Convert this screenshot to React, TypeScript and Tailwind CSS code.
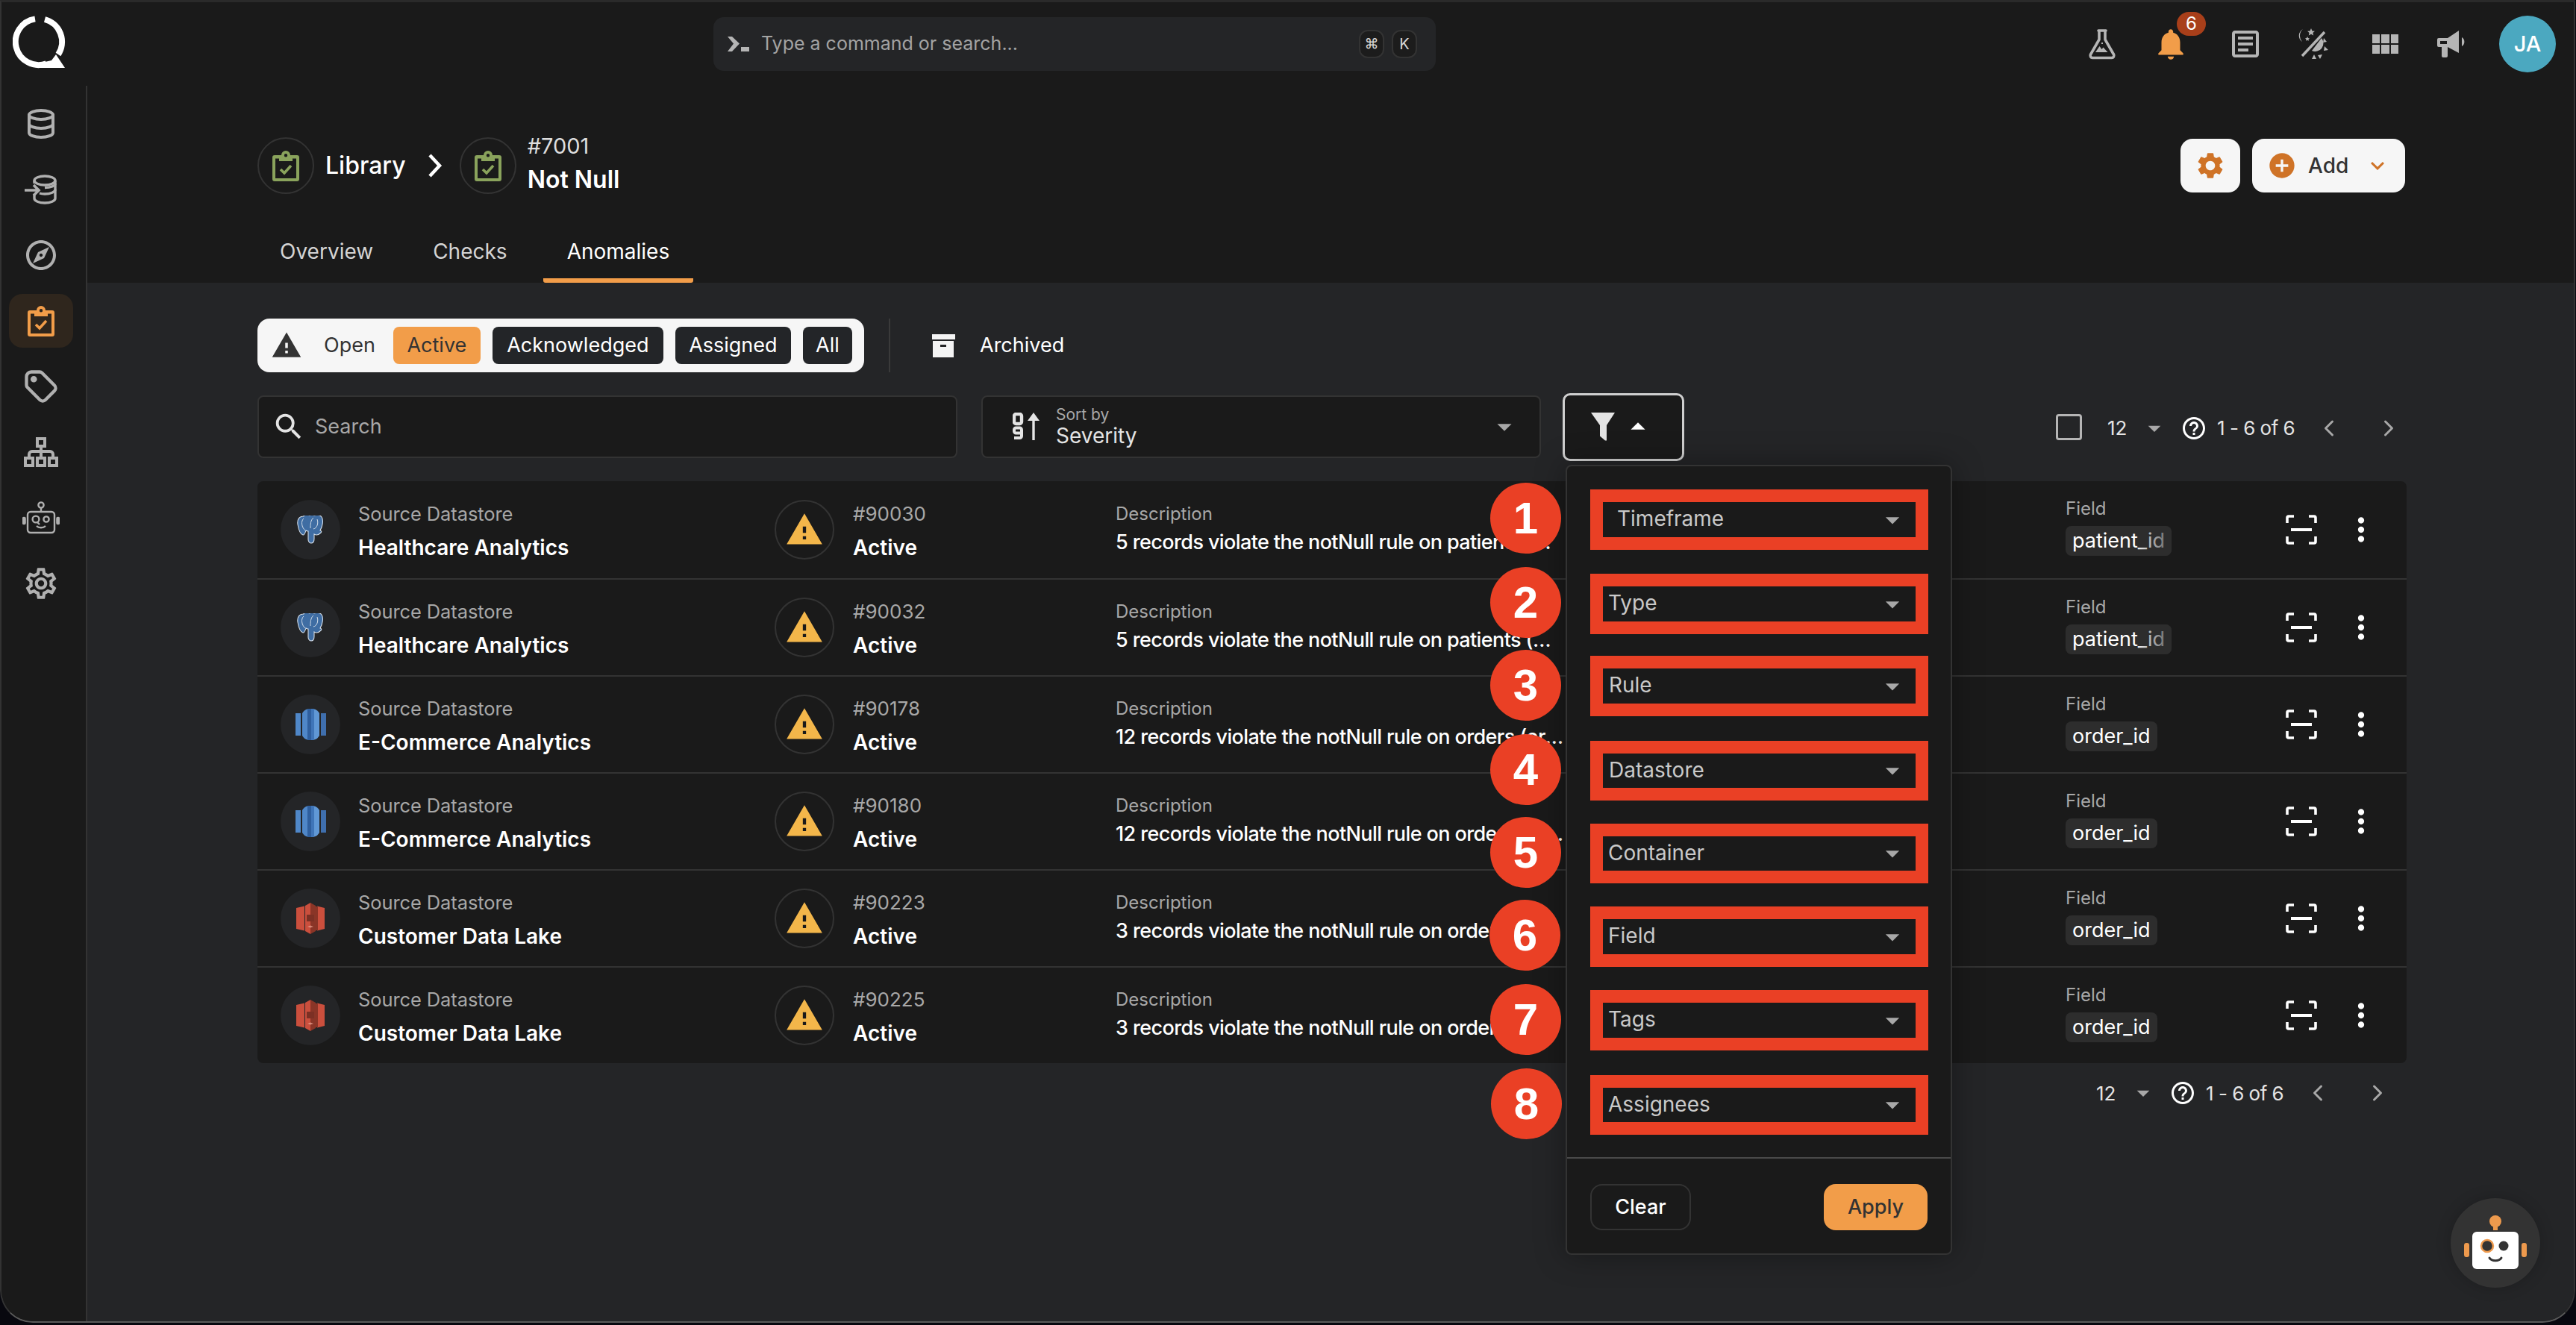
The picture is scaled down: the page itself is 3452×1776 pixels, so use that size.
import React from "react";
import {
  MdOutlineExplore, MdOutlineSettings, MdNotifications,
  MdOutlineArticle, MdSettings, MdAddCircle, MdKeyboardArrowDown,
  MdWarning, MdSearch, MdHelpOutline, MdMoreVert, MdArrowDropDown, MdArrowDropUp,
} from "react-icons/md";
import { TbDatabase, TbTag } from "react-icons/tb";
import { ChevronLeft, ChevronRight } from "lucide-react";

const Ingest = () => (
  <svg width="46" height="40" viewBox="0 0 46 40" fill="none" stroke="#b0b0b0" strokeWidth="3.400">
    <ellipse cx="28" cy="8" rx="14" ry="6" />
    <path d="M14 8v4M42 8v24c0 3.300-6.300 6-14 6s-14-2.700-14-6v-5" />
    <path d="M42 20c0 3.300-6.300 6-14 6-3 0-5-.3-7-1M42 12c0 3-6 5.500-14 5.500" />
    <path d="M1 21h19M13 14l7 7-7 7" strokeWidth="3.600" />
  </svg>
);
const Sitemap = () => (
  <svg width="46" height="40" viewBox="0 0 46 40" fill="none" stroke="#b0b0b0" strokeWidth="4">
    <rect x="18" y="2" width="10" height="10" /><rect x="2" y="28" width="10" height="10" />
    <rect x="18" y="28" width="10" height="10" /><rect x="34" y="28" width="10" height="10" />
    <path d="M23 12v16M7 28v-5a4 4 0 0 1 4-4h24a4 4 0 0 1 4 4v5" />
  </svg>
);
const RobotIcon = () => (
  <svg width="50" height="44" viewBox="0 0 50 44" fill="none" stroke="#b0b0b0" strokeWidth="2.400">
    <circle cx="25" cy="5" r="3.600" /><path d="M25 9v5" />
    <rect x="7" y="14" width="36" height="28" rx="4" />
    <circle cx="18" cy="24" r="4.400" /><circle cx="32" cy="24" r="3.600" />
    <path d="M20 28l3 3M19 33c3 3 9 3 12 0" />
    <rect x="1" y="22" width="2.600" height="8" rx="1" fill="#b0b0b0" /><rect x="46.400" y="22" width="2.600" height="8" rx="1" fill="#b0b0b0" />
  </svg>
);
const Flask = () => (
  <svg width="38" height="42" viewBox="0 0 38 42" fill="none">
    <path d="M14 3h10M15 4v11L3.500 35a3 3 0 0 0 2.600 4.500h25.800a3 3 0 0 0 2.600-4.500L23 15V4" stroke="#b5b5b5" strokeWidth="3.600" strokeLinejoin="round" strokeLinecap="round" />
    <path d="M10 32l5.500-8 3 4 2-2.500 6 6.500z" fill="#b5b5b5" /><rect x="18" y="19" width="2" height="2" fill="#b5b5b5" />
  </svg>
);
const ThemeIcon = () => (
  <svg width="42" height="44" viewBox="0 0 42 44" fill="#b5b5b5">
    <path d="M36 6L6 38" stroke="#b5b5b5" strokeWidth="3.400" fill="none" />
    <path d="M7 2a10 10 0 0 0-1 17 12 12 0 0 1 1-17z" />
    <path d="M18 1l1.500 3.400 3.500.4-2.600 2.300.8 3.400-3.200-1.800-3.200 1.800.8-3.400L13 4.800l3.500-.4zM13 12l1 2 2 .3-1.500 1.400.4 2.100-1.900-1-1.900 1 .4-2.100-1.500-1.400 2-.3z" />
    <path d="M32 14a11 11 0 0 1-13 17z" /><path d="M35 14l4 5-5 1zM36 25l5 5-6 1zM33 36l-3 6-3-5zM22 36l3 6-6 0z" />
  </svg>
);
const GridIcon = () => (
  <div className="grid grid-cols-3 grid-rows-2 gap-[2px] w-[35px] h-[26px]">
    {Array.from({ length: 6 }).map((_, i) => <div key={i} className="bg-[#b5b5b5]" />)}
  </div>
);
const Megaphone = () => (
  <svg width="40" height="36" viewBox="0 0 40 36" fill="#b5b5b5">
    <path fillRule="evenodd" d="M2 10h12L29 0v30L14 22H2a2 2 0 0 1-2-2v-8a2 2 0 0 1 2-2zM4 14v4h9v-4z" />
    <path d="M6 22h8v12a2 2 0 0 1-2 2H8a2 2 0 0 1-2-2z" />
    <path d="M33 9a7 7 0 0 1 0 12z" />
  </svg>
);
const Logo = () => (
  <svg width="72" height="72" viewBox="0 0 72 72" fill="none">
    <path d="M30 4.400A31 31 0 1 0 45 64.300" stroke="#fff" strokeWidth="8" />
    <path d="M43 5A31 31 0 0 1 61 52" stroke="#fff" strokeWidth="8" />
    <path d="M52 60l6-8 12 18H34v-6z" fill="#fff" />
  </svg>
);
const Terminal = () => (
  <svg width="30" height="22" viewBox="0 0 30 22" fill="#b5b5b5">
    <path d="M0 1h6l10 9.500L6 21H0l8-10.500z" /><rect x="18" y="15" width="11" height="6" />
  </svg>
);
const Clip = ({ color = "#8aa35c" }: { color?: string }) => (
  <svg width="36" height="41" viewBox="0 0 36 41">
    <path fillRule="evenodd" fill={color} d="M3 6h9a6 6 0 0 1 12 0h9a3 3 0 0 1 3 3v29a3 3 0 0 1-3 3H3a3 3 0 0 1-3-3V9a3 3 0 0 1 3-3zM4 10.500V37h28V10.500h-5V14H9v-3.500zM18 4a2.200 2.200 0 1 0 0 4.400A2.200 2.200 0 0 0 18 4z" />
    <path d="M11 25l5 5 9-10" fill="none" stroke={color} strokeWidth="3.600" />
  </svg>
);
const Funnel = () => (
  <svg width="34" height="38" viewBox="0 0 34 38" fill="#e4e4e4">
    <path d="M1 0h32L22 17v20.500l-2 0-7-6V17z" />
  </svg>
);
const SortIcon = () => (
  <svg width="36" height="38" viewBox="0 0 36 38" fill="none" stroke="#e4e4e4">
    <rect x="2" y="2" width="10" height="13" rx="2.500" strokeWidth="4.400" />
    <path d="M12 31v-8a2.500 2.500 0 0 0-2.500-2.500h-5A2.500 2.500 0 0 0 2 23v2a2.500 2.500 0 0 0 2.500 2.500H12v4a2.500 2.500 0 0 1-2.500 2.500H2" strokeWidth="4" />
    <path d="M28 37V8" strokeWidth="3.400" /><path d="M20 11l8-11 8 11z" fill="#e4e4e4" stroke="none" />
  </svg>
);
const ArchiveIcon = () => (
  <svg width="31" height="31" viewBox="0 0 31 31">
    <rect x="0" y="0" width="31" height="7" fill="#f4f4f4" />
    <path fillRule="evenodd" d="M1 9h28v22H1zM11 14v3h8v-3z" fill="#f4f4f4" />
  </svg>
);
const ScanIcon = () => (
  <svg width="42" height="40" viewBox="0 0 42 40" fill="none" stroke="#fff" strokeWidth="3.600">
    <path d="M2 11V4a2 2 0 0 1 2-2h7M31 2h7a2 2 0 0 1 2 2v7M40 29v7a2 2 0 0 1-2 2h-7M11 38H4a2 2 0 0 1-2-2v-7" />
    <path d="M7 20h28" strokeWidth="4" />
  </svg>
);
const Redshift = () => (
  <svg width="41" height="42" viewBox="0 0 41 42">
    <rect x="0" y="6" width="7" height="30" fill="#4f87c8" /><rect x="34" y="6" width="7" height="30" fill="#3f6fae" />
    <path d="M9 6Q12 1 16 .5V41.500Q12 41 9 36z" fill="#4f87c8" />
    <rect x="16" y="0" width="5" height="42" fill="#2f5f9e" />
    <rect x="21" y="0" width="4" height="42" fill="#3f75b8" />
    <path d="M25 .5Q29 1 32 6V36Q29 41 25 41.500z" fill="#6098d6" />
  </svg>
);
const S3 = () => (
  <svg width="38" height="42" viewBox="0 0 38 42">
    <path d="M0 7l11-2.500v33L0 35z" fill="#cb4f3d" /><path d="M38 7l-10-2.500v33L38 35z" fill="#cb4f3d" />
    <rect x="26" y="5" width="3" height="32" fill="#8a3527" />
    <path d="M19 0l-7 4v34l7 4z" fill="#cb4f3d" /><path d="M19 0l7 4v34l-7 4z" fill="#8a3527" />
    <rect x="14" y="16" width="10" height="9" fill="#7c3024" />
    <path d="M15 32l4-1.500 4 1.500-4 1.500z" fill="#e8a090" opacity="0.75" />
  </svg>
);
const Elephant = () => (
  <svg width="36" height="38" viewBox="0 0 36 38">
    <path d="M9 1C3 1 0 5 1 12c1 6 3 13 7 14 2 .5 3-3 4-6 1 1 2 1 3 1v11c0 3 2 5 4 5s4-2 4-6v-6c3 2 6 1 9-2 2-2-1-3-1-3 3-5 5-14 2-18-2-3-7-3-10-2-2-1-4-1-6 0-2-.8-5-1-8 0z" fill="#3f6da3" stroke="#d5dfea" strokeWidth="1.100" />
    <path d="M9 4c-4 3-3 12 2 16M22 3c-4 3-4 10-4 14M27 5c2 5 0 12-5 13" fill="none" stroke="#d5dfea" strokeWidth="1" />
  </svg>
);

const rows = [
  { logo: <Elephant />, name: "Healthcare Analytics", id: "#90030", desc: "5 records violate the notNull rule on patients (patient_id)", field: "patient_id" },
  { logo: <Elephant />, name: "Healthcare Analytics", id: "#90032", desc: "5 records violate the notNull rule on patients (patient_id)", field: "patient_id" },
  { logo: <Redshift />, name: "E-Commerce Analytics", id: "#90178", desc: "12 records violate the notNull rule on orders (order_id)", field: "order_id" },
  { logo: <Redshift />, name: "E-Commerce Analytics", id: "#90180", desc: "12 records violate the notNull rule on orders (order_id)", field: "order_id" },
  { logo: <S3 />, name: "Customer Data Lake", id: "#90223", desc: "3 records violate the notNull rule on orders (order_id)", field: "order_id" },
  { logo: <S3 />, name: "Customer Data Lake", id: "#90225", desc: "3 records violate the notNull rule on orders (order_id)", field: "order_id" },
];

const filters = [
  { label: "Timeframe", pad: "pl-[19px]", mt: "mt-[31px]", h: "h-[81px]" },
  { label: "Type", pad: "pl-[7px]", mt: "mt-[32px]", h: "h-[81px]" },
  { label: "Rule", pad: "pl-[8px]", mt: "mt-[29px]", h: "h-[81px]" },
  { label: "Datastore", pad: "pl-[8px]", mt: "mt-[33px]", h: "h-[80px]" },
  { label: "Container", pad: "pl-[7px]", mt: "mt-[31px]", h: "h-[80px]" },
  { label: "Field", pad: "pl-[7px]", mt: "mt-[31px]", h: "h-[81px]" },
  { label: "Tags", pad: "pl-[7px]", mt: "mt-[31px]", h: "h-[81px]" },
  { label: "Assignees", pad: "pl-[7px]", mt: "mt-[33px]", h: "h-[80px]" },
];

const bubbles = [
  { n: 1, cls: "left-[1997px] top-[647px]" },
  { n: 2, cls: "left-[1997px] top-[760px]" },
  { n: 3, cls: "left-[1997px] top-[871px]" },
  { n: 4, cls: "left-[1997px] top-[984px]" },
  { n: 5, cls: "left-[1997px] top-[1095px]" },
  { n: 6, cls: "left-[1996px] top-[1206px]" },
  { n: 7, cls: "left-[1997px] top-[1319px]" },
  { n: 8, cls: "left-[1998px] top-[1432px]" },
];

const Pager = ({ className }: { className: string }) => (
  <div className={`flex items-center text-[#e4e4e4] text-[26px] ${className}`}>
    <span className="w-[26px]">12</span>
    <MdArrowDropDown size={40} color="#a8a8a8" className="ml-[17px] mr-[15px]" />
    <MdHelpOutline size={36} color="#fff" className="mr-[13px]" />
    <span className="w-[106px] whitespace-nowrap tracking-[-0.5px]">1 - 6 of 6</span>
    <ChevronLeft size={36} color="#a8a8a8" strokeWidth={2} className="ml-[26px]" />
    <ChevronRight size={36} color="#a8a8a8" strokeWidth={2} className="ml-[44px]" />
  </div>
);

export default function App() {
  return (
    <div className="relative w-[3452px] h-[1776px] overflow-hidden bg-[#08080f] font-['Inter',sans-serif]">
      <div className="flex flex-col w-[3451px] h-[1773px] rounded-b-[44px] overflow-hidden border-x-2 border-b-2 border-t-[3px] border-x-[#333] border-b-[#5a5a5a] border-t-[#2a2a2a] bg-[#1a1a1a]">
        {/* top bar */}
        <div className="flex items-center h-[112px] shrink-0 bg-[#1a1a1a]">
          <div className="ml-[15px] -mt-[4px] w-[72px]"><Logo /></div>
          <div className="ml-[867px] flex items-center w-[968px] h-[72px] rounded-[14px] bg-[#242527]">
            <div className="ml-[19px] w-[45px]"><Terminal /></div>
            <span className="text-[25px] text-[#a3a3a3] whitespace-nowrap">Type a command or search...</span>
            <div className="ml-auto flex gap-[10px] mr-[25px]">
              <span className="flex items-center justify-center w-[34px] h-[38px] rounded-[12px] border-2 border-[#333] bg-[#1c1c1c] text-[#d8d8d8] text-[19px]">⌘</span>
              <span className="flex items-center justify-center w-[34px] h-[38px] rounded-[12px] border-2 border-[#333] bg-[#1c1c1c] text-[#d8d8d8] text-[20px]">K</span>
            </div>
          </div>
          <div className="ml-[874px] w-[38px]"><Flask /></div>
          <div className="relative ml-[50px] w-[44px]">
            <MdNotifications size={50} color="#f29d49" className="-ml-[2px]" />
            <span className="absolute left-[31px] -top-[18px] flex items-center justify-center w-[39px] h-[32px] rounded-full bg-[#a83f1a] text-white text-[24px]">6</span>
          </div>
          <div className="ml-[55px]"><MdOutlineArticle size={48} color="#b5b5b5" /></div>
          <div className="ml-[46px]"><ThemeIcon /></div>
          <div className="ml-[58px]"><GridIcon /></div>
          <div className="ml-[52px]"><Megaphone /></div>
          <div className="ml-[43px] flex items-center justify-center w-[76px] h-[76px] rounded-full bg-[#4ba8c0] text-white text-[29px] font-medium">JA</div>
        </div>

        <div className="flex flex-1 min-h-0">
          {/* sidebar */}
          <div className="flex flex-col items-center w-[115px] shrink-0 border-r-2 border-[#333] pt-[26px] pr-[7px] gap-[38px] bg-[#1a1a1a]">
            <div className="h-[50px] flex items-center"><TbDatabase size={48} color="#b0b0b0" /></div>
            <div className="h-[50px] flex items-center"><Ingest /></div>
            <div className="h-[50px] flex items-center"><MdOutlineExplore size={48} color="#b0b0b0" /></div>
            <div className="h-[50px] flex items-center justify-center relative">
              <div className="absolute -left-[25px] -top-[11px] w-[86px] h-[72px] rounded-[18px] bg-[#2f261d]" />
              <div className="relative"><Clip color="#f29d49" /></div>
            </div>
            <div className="h-[50px] flex items-center"><TbTag size={52} color="#b0b0b0" /></div>
            <div className="h-[50px] flex items-center"><Sitemap /></div>
            <div className="h-[50px] flex items-center"><RobotIcon /></div>
            <div className="h-[50px] flex items-center"><MdOutlineSettings size={50} color="#b0b0b0" /></div>
          </div>

          <div className="flex flex-col flex-1 min-w-0">
            {/* header */}
            <div className="h-[264px] shrink-0 bg-[#1a1a1a] pl-[228px] pr-[226px] flex flex-col">
              <div className="flex items-center justify-between mt-[69px]">
                <div className="flex items-center h-[76px]">
                  <div className="flex items-center justify-center w-[76px] h-[76px] rounded-full border-2 border-[#333]"><Clip /></div>
                  <span className="ml-[15px] text-white text-[32px] font-medium">Library</span>
                  <svg width="20" height="32" viewBox="0 0 20 32" fill="none" stroke="#fff" strokeWidth="4.500" className="ml-[29px]"><path d="M3 2l13 14L3 30" /></svg>
                  <div className="ml-[23px] flex items-center justify-center w-[76px] h-[76px] rounded-full border-2 border-[#333]"><Clip /></div>
                  <div className="ml-[15px] flex flex-col">
                    <span className="text-[#dedede] text-[29px] leading-[32px]">#7001</span>
                    <span className="text-white text-[32px] leading-[46px] font-semibold mt-[6px]">Not Null</span>
                  </div>
                </div>
                <div className="flex items-center gap-[16px]">
                  <div className="flex items-center justify-center w-[80px] h-[72px] rounded-[16px] bg-[#f6f6f6]"><MdSettings size={42} color="#cf7327" /></div>
                  <div className="flex items-center w-[205px] h-[72px] rounded-[16px] bg-[#f6f6f6]">
                    <MdAddCircle size={40} color="#cf7327" className="ml-[20px]" />
                    <span className="ml-[15px] text-[28px] font-medium text-[#333]">Add</span>
                    <MdKeyboardArrowDown size={36} color="#cf7327" className="ml-[21px]" />
                  </div>
                </div>
              </div>
              <div className="flex items-end flex-1 gap-[16px] text-[28px] -ml-[2px]">
                <div className="h-[64px] px-[32px] pt-[1px] text-[#d4d4d4]">Overview</div>
                <div className="h-[64px] px-[32px] pt-[1px] text-[#d4d4d4]">Checks</div>
                <div className="h-[64px] px-[32px] pt-[1px] text-white border-b-[6px] border-[#f29d49] rounded-b-[3px]">Anomalies</div>
              </div>
            </div>

            {/* content */}
            <div className="flex-1 bg-[#242527] pl-[228px] pr-[224px] pt-[48px]">
              <div className="flex items-center h-[72px]">
                <div className="flex items-center w-[813px] h-[72px] rounded-[16px] bg-[#f6f6f6]">
                  <MdWarning size={42} color="#333" className="ml-[18px]" />
                  <span className="ml-[29px] text-[27px] text-[#333]">Open</span>
                  <span className="ml-[24px] flex items-center justify-center w-[117px] h-[50px] rounded-[8px] bg-[#f29d49] text-[27px] text-[#333]">Active</span>
                  <span className="ml-[16px] flex items-center justify-center w-[229px] h-[50px] rounded-[8px] bg-[#232528] text-[27px] text-white">Acknowledged</span>
                  <span className="ml-[16px] flex items-center justify-center w-[155px] h-[50px] rounded-[8px] bg-[#232528] text-[27px] text-white">Assigned</span>
                  <span className="ml-[16px] flex items-center justify-center w-[66px] h-[50px] rounded-[8px] bg-[#232528] text-[27px] text-white">All</span>
                </div>
                <div className="ml-[33px] w-[2px] h-[72px] bg-[#3a3a3a]" />
                <div className="ml-[56px]"><ArchiveIcon /></div>
                <span className="ml-[33px] text-[27px] text-white">Archived</span>
              </div>

              <div className="flex items-center mt-[31px] h-[84px]">
                <div className="flex items-center w-[938px] h-[84px] rounded-[8px] border-2 border-[#333] bg-[#1a1a1a]">
                  <MdSearch size={46} color="#e4e4e4" className="ml-[17px]" />
                  <span className="ml-[12px] text-[27px] text-[#a8a8a8]">Search</span>
                </div>
                <div className="flex items-center ml-[32px] w-[750px] h-[84px] rounded-[8px] border-2 border-[#333] bg-[#1a1a1a]">
                  <div className="ml-[40px]"><SortIcon /></div>
                  <div className="ml-[22px] flex flex-col">
                    <span className="text-[21px] leading-[24px] text-[#a8a8a8]">Sort by</span>
                    <span className="text-[28px] leading-[32px] text-[#e4e4e4]">Severity</span>
                  </div>
                  <MdArrowDropDown size={46} color="#a8a8a8" className="ml-auto mr-[24px]" />
                </div>
                <div className="flex items-center ml-[29px] w-[163px] h-[91px] rounded-[10px] border-[3px] border-[#cfcfcf] bg-[#1a1a1a]">
                  <div className="ml-[34px]"><Funnel /></div>
                  <MdArrowDropUp size={46} color="#fff" className="ml-[7px]" />
                </div>
                <div className="ml-auto flex items-center">
                  <div className="w-[35px] h-[35px] rounded-[4px] border-[3px] border-[#b5b5b5]" />
                  <Pager className="ml-[34px] pr-[6px] mt-[3px]" />
                </div>
              </div>

              <div className="mt-[31px] rounded-[8px] overflow-hidden bg-[#1a1a1a]">
                {rows.map((r, i) => (
                  <div key={i} className={`flex items-center h-[130px] ${i > 0 ? "border-t-2 border-[#333]" : ""}`}>
                    <div className="ml-[31px] flex items-center justify-center w-[80px] h-[80px] rounded-full bg-[#242527]">{r.logo}</div>
                    <div className="ml-[24px] w-[558px] flex flex-col pt-[3px]">
                      <span className="text-[25.500px] leading-[34px] text-[#a8a8a8] tracking-[-0.1px]">Source Datastore</span>
                      <span className="mt-[10px] text-[28px] leading-[36px] font-semibold text-white">{r.name}</span>
                    </div>
                    <div className="flex items-center justify-center w-[80px] h-[80px] rounded-full border-2 border-[#333]"><MdWarning size={52} color="#f3b64a" /></div>
                    <div className="ml-[25px] w-[352px] flex flex-col pt-[3px]">
                      <span className="text-[26px] leading-[34px] text-[#a8a8a8]">{r.id}</span>
                      <span className="mt-[10px] text-[28px] leading-[36px] font-semibold text-white">Active</span>
                    </div>
                    <div className={`flex flex-col -mt-[4px] ${r.field === "patient_id" ? "w-[594px] mr-[9px]" : "w-[603px]"}`}>
                      <span className="text-[24px] leading-[34px] text-[#a8a8a8]">Description</span>
                      <span className="mt-[3px] text-[27px] leading-[36px] font-medium text-white truncate tracking-[-0.6px]">{r.desc}</span>
                    </div>
                    <div className="ml-[670px] w-[295px] flex flex-col items-start self-start pt-[22px]">
                      <span className="text-[24px] leading-[30px] text-[#a8a8a8]">Field</span>
                      <span className="relative mt-[8px] flex items-center h-[40px] px-[9px] rounded-[8px] bg-[#2d2d2d] text-[27px] text-white whitespace-nowrap">
                        {r.field}
                        {r.field === "patient_id" && <span className="absolute inset-y-0 right-0 w-[50px] rounded-r-[8px] bg-linear-to-r from-transparent to-[#2d2d2d]/80" />}
                      </span>
                    </div>
                    <ScanIcon />
                    <MdMoreVert size={50} color="#fff" className="ml-[34px]" />
                  </div>
                ))}
              </div>
              <div className="flex justify-end mt-[20px]">
                <Pager className="pr-[13px] mr-[8px]" />
              </div>
            </div>
          </div>
        </div>
      </div>

      {/* filter dropdown */}
      <div className="absolute left-[2098px] top-[623px] w-[518px] h-[1059px] rounded-[8px] border-2 border-[#333] bg-[#1a1a1a] shadow-[0_0_40px_rgba(0,0,0,0.35)] flex flex-col">
        <div className="flex flex-col pl-[31px]">
          {filters.map((f, i) => (
            <div key={i} className={`flex items-center w-[453px] ${f.h} ${f.mt} border-[17px] border-[#ea4025] ${f.pad}`}>
              <span className="text-[28px] text-[#c9c9c9] -mt-[3px]">{f.label}</span>
              <MdArrowDropDown size={44} color="#a8a8a8" className="ml-auto mr-[9px]" />
            </div>
          ))}
        </div>
        <div className="mt-[30px] h-[2px] bg-[#4a4a4a]" />
        <div className="flex items-center justify-between mt-[34px] pl-[31px] pr-[31px]">
          <span className="flex items-center justify-center w-[135px] h-[62px] rounded-[16px] border-2 border-[#333] text-[27px] font-medium text-white">Clear</span>
          <span className="flex items-center justify-center w-[139px] h-[62px] rounded-[16px] bg-[#f29d49] text-[27px] font-medium text-[#333]">Apply</span>
        </div>
      </div>

      {/* numbered callouts */}
      {bubbles.map((b) => (
        <div key={b.n} className={`absolute ${b.cls} flex items-center justify-center w-[95px] h-[95px] rounded-full bg-[#ea4025] text-white text-[60px] font-bold font-['Liberation_Sans',sans-serif]`}>{b.n}</div>
      ))}

      {/* assistant bot */}
      <div className="absolute left-[3284px] top-[1606px] flex items-center justify-center w-[120px] h-[120px] rounded-full bg-[#333] shadow-[0_0_20px_rgba(0,0,0,0.2)]">
        <svg width="84" height="74" viewBox="0 0 84 74">
          <circle cx="42" cy="8" r="8" fill="#ee9a4d" /><rect x="39" y="12" width="6" height="8" fill="#ee9a4d" />
          <rect x="11" y="22" width="62" height="50" rx="6" fill="#fff" />
          <rect x="0" y="37" width="7" height="19" rx="3" fill="#ee9a4d" /><rect x="77" y="37" width="7" height="19" rx="3" fill="#ee9a4d" />
          <circle cx="31" cy="41" r="8" fill="#333" stroke="#ee9a4d" strokeWidth="2.500" />
          <circle cx="53" cy="41" r="6.500" fill="#333" />
          <path d="M34 57c3 5 13 5 16 0" stroke="#333" strokeWidth="3" fill="none" strokeLinecap="round" />
        </svg>
      </div>
    </div>
  );
}
